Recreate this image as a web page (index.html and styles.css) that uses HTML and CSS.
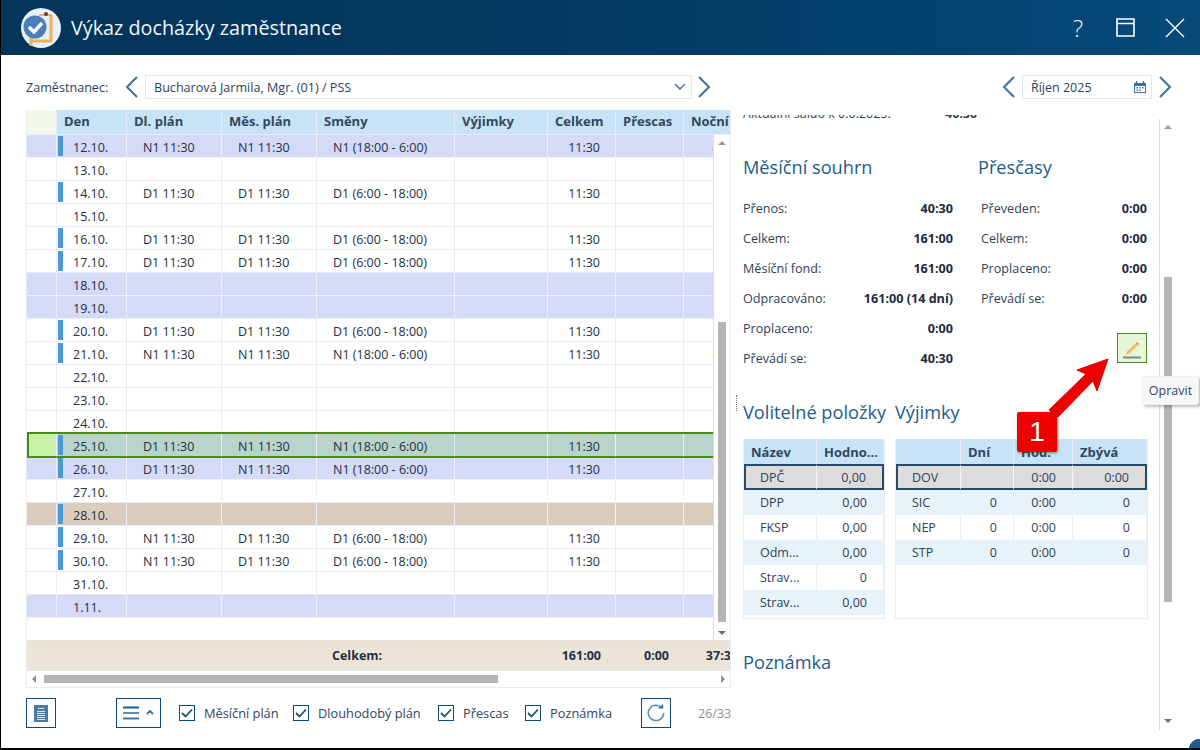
FILE: index.html
```html
<!DOCTYPE html>
<html lang="cs">
<head>
<meta charset="utf-8">
<title>Výkaz docházky zaměstnance</title>
<link rel="stylesheet" href="styles.css">
</head>
<body>
<div class="window">
  <header class="titlebar">
    <svg class="logo" width="42" height="42" viewBox="0 0 42 42">
      <circle cx="21" cy="21" r="20" fill="#e6f1f9"/>
      <path d="M11 39V30M11 34h20V8" fill="none" stroke="#f0b060" stroke-width="3"/>
      <path d="M19 7h13v2H19z" fill="#f0b060"/>
      <circle cx="26" cy="7" r="2" fill="#6a3a30"/>
      <circle cx="15" cy="20" r="11.500" fill="#4c7dbd"/>
      <path d="M9 20l5 5 8-9" fill="none" stroke="#fff" stroke-width="3.400"/>
    </svg>
    <h1 class="title">Výkaz docházky zaměstnance</h1>
    <span class="help">?</span>
    <svg class="winbtn" width="19" height="19" viewBox="0 0 19 19"><path d="M1 1h17v17H1zM1 5.500h17" fill="none" stroke="#fff" stroke-width="1.600"/></svg>
    <svg class="winbtn close" width="20" height="20" viewBox="0 0 20 20"><path d="M1 1l18 18M19 1L1 19" fill="none" stroke="#fff" stroke-width="1.400"/></svg>
  </header>

  <main class="content">
    <section class="left">
      <div class="filter">
        <span class="flabel">Zaměstnanec:</span>
        <svg class="chev" width="14" height="22" viewBox="0 0 14 22"><path d="M12 1L2 11l10 10" fill="none" stroke="#3f6f9f" stroke-width="2"/></svg>
        <div class="combo"><span>Bucharová Jarmila, Mgr. (01) / PSS</span>
          <svg width="12" height="8" viewBox="0 0 12 8"><path d="M1 1l5 5 5-5" fill="none" stroke="#3f6f9f" stroke-width="1.400"/></svg>
        </div>
        <svg class="chev" width="14" height="22" viewBox="0 0 14 22"><path d="M2 1l10 10L2 21" fill="none" stroke="#3f6f9f" stroke-width="2"/></svg>
      </div>

      <div class="grid">
        <div class="grid-body">
          <table class="days">
            <colgroup><col class="c0"><col class="c1"><col class="c2"><col class="c2"><col class="c3"><col class="c4"><col class="c5"><col class="c5"><col class="c6"></colgroup>
            <thead><tr><th class="corner"></th><th>Den</th><th>Dl. plán</th><th>Měs. plán</th><th>Směny</th><th>Výjimky</th><th>Celkem</th><th>Přescas</th><th>Noční</th></tr></thead>
            <tbody>
              <tr class="violet"><td></td><td class="day mark">12.10.</td><td>N1 11:30</td><td>N1 11:30</td><td>N1 (18:00 - 6:00)</td><td></td><td class="r">11:30</td><td></td><td class="night">8:00</td></tr>
              <tr><td></td><td class="day">13.10.</td><td></td><td></td><td></td><td></td><td></td><td></td><td></td></tr>
              <tr><td></td><td class="day mark">14.10.</td><td>D1 11:30</td><td>D1 11:30</td><td>D1 (6:00 - 18:00)</td><td></td><td class="r">11:30</td><td></td><td></td></tr>
              <tr><td></td><td class="day">15.10.</td><td></td><td></td><td></td><td></td><td></td><td></td><td></td></tr>
              <tr><td></td><td class="day mark">16.10.</td><td>D1 11:30</td><td>D1 11:30</td><td>D1 (6:00 - 18:00)</td><td></td><td class="r">11:30</td><td></td><td></td></tr>
              <tr><td></td><td class="day mark">17.10.</td><td>D1 11:30</td><td>D1 11:30</td><td>D1 (6:00 - 18:00)</td><td></td><td class="r">11:30</td><td></td><td></td></tr>
              <tr class="violet"><td></td><td class="day">18.10.</td><td></td><td></td><td></td><td></td><td></td><td></td><td></td></tr>
              <tr class="violet"><td></td><td class="day">19.10.</td><td></td><td></td><td></td><td></td><td></td><td></td><td></td></tr>
              <tr><td></td><td class="day mark">20.10.</td><td>D1 11:30</td><td>D1 11:30</td><td>D1 (6:00 - 18:00)</td><td></td><td class="r">11:30</td><td></td><td></td></tr>
              <tr><td></td><td class="day mark">21.10.</td><td>N1 11:30</td><td>N1 11:30</td><td>N1 (18:00 - 6:00)</td><td></td><td class="r">11:30</td><td></td><td class="night">8:00</td></tr>
              <tr><td></td><td class="day">22.10.</td><td></td><td></td><td></td><td></td><td></td><td></td><td></td></tr>
              <tr><td></td><td class="day">23.10.</td><td></td><td></td><td></td><td></td><td></td><td></td><td></td></tr>
              <tr><td></td><td class="day">24.10.</td><td></td><td></td><td></td><td></td><td></td><td></td><td></td></tr>
              <tr class="sel"><td></td><td class="day mark">25.10.</td><td>D1 11:30</td><td>N1 11:30</td><td>N1 (18:00 - 6:00)</td><td></td><td class="r">11:30</td><td></td><td class="night">8:00</td></tr>
              <tr class="violet"><td></td><td class="day mark">26.10.</td><td>D1 11:30</td><td>N1 11:30</td><td>N1 (18:00 - 6:00)</td><td></td><td class="r">11:30</td><td></td><td class="night">8:00</td></tr>
              <tr><td></td><td class="day">27.10.</td><td></td><td></td><td></td><td></td><td></td><td></td><td></td></tr>
              <tr class="tan"><td></td><td class="day mark">28.10.</td><td></td><td></td><td></td><td></td><td></td><td></td><td></td></tr>
              <tr><td></td><td class="day mark">29.10.</td><td>N1 11:30</td><td>D1 11:30</td><td>D1 (6:00 - 18:00)</td><td></td><td class="r">11:30</td><td></td><td></td></tr>
              <tr><td></td><td class="day mark">30.10.</td><td>N1 11:30</td><td>D1 11:30</td><td>D1 (6:00 - 18:00)</td><td></td><td class="r">11:30</td><td></td><td></td></tr>
              <tr><td></td><td class="day">31.10.</td><td></td><td></td><td></td><td></td><td></td><td></td><td></td></tr>
              <tr class="violet"><td></td><td class="day">1.11.</td><td></td><td></td><td></td><td></td><td></td><td></td><td></td></tr>
            </tbody>
          </table>
          <div class="vscroll">
            <span class="arrow up"></span>
            <span class="vthumb"></span>
            <span class="arrow down"></span>
          </div>
        </div>
        <table class="foot">
          <colgroup><col class="c0"><col class="c1"><col class="c2"><col class="c2"><col class="c3"><col class="c4"><col class="c5"><col class="c5"><col class="c6"></colgroup>
          <tr><td></td><td></td><td></td><td></td><td>Celkem:</td><td></td><td class="r">161:00</td><td class="r">0:00</td><td class="r wide">37:30</td></tr>
        </table>
        <div class="hscroll">
          <span class="arrow lft"></span>
          <span class="hthumb"></span>
          <span class="arrow rgt"></span>
        </div>
      </div>

      <div class="actions">
        <button class="btn doc" type="button" aria-label="Sestava">
          <svg width="14" height="17" viewBox="0 0 14 17"><path d="M0 0h14v17H0z" fill="#4a7ca5"/><path d="M4 3.500h6M3 6.500h8M3 8.500h8M3 10.500h8M3 12.500h8M3 14.500h8" stroke="#dbe8f1" stroke-width="1"/></svg>
        </button>
        <button class="btn menu" type="button" aria-label="Nabídka">
          <svg width="32" height="14" viewBox="0 0 32 14"><path d="M0 1.500h16" stroke="#1d5c8d" stroke-width="2"/><path d="M0 7h16" stroke="#5b8cb3" stroke-width="2"/><path d="M0 12.500h16" stroke="#3f76a3" stroke-width="2"/><path d="M24 8l3-3 3 3" fill="none" stroke="#35709f" stroke-width="1.800"/></svg>
        </button>
        <label class="check c-plan"><span class="box"><svg width="12" height="10" viewBox="0 0 12 10"><path d="M1 5l3.500 3.500L11 1.500" fill="none" stroke="#1d4f80" stroke-width="1.800"/></svg></span>Měsíční plán</label>
        <label class="check c-long"><span class="box"><svg width="12" height="10" viewBox="0 0 12 10"><path d="M1 5l3.500 3.500L11 1.500" fill="none" stroke="#1d4f80" stroke-width="1.800"/></svg></span>Dlouhodobý plán</label>
        <label class="check c-over"><span class="box"><svg width="12" height="10" viewBox="0 0 12 10"><path d="M1 5l3.500 3.500L11 1.500" fill="none" stroke="#1d4f80" stroke-width="1.800"/></svg></span>Přescas</label>
        <label class="check c-note"><span class="box"><svg width="12" height="10" viewBox="0 0 12 10"><path d="M1 5l3.500 3.500L11 1.500" fill="none" stroke="#1d4f80" stroke-width="1.800"/></svg></span>Poznámka</label>
        <button class="btn refresh" type="button" aria-label="Obnovit">
          <svg width="18" height="18" viewBox="0 0 18 18"><path d="M14.600 3.600A7.700 7.700 0 1 0 16.700 9" fill="none" stroke="#5b8cb3" stroke-width="1.500"/><path d="M10.800 4.600h5.400V0z" fill="#2f6a98"/></svg>
        </button>
        <span class="count">26/33</span>
      </div>
    </section>

    <section class="right">
      <div class="period">
        <svg class="chev" width="14" height="22" viewBox="0 0 14 22"><path d="M12 1L2 11l10 10" fill="none" stroke="#3f6f9f" stroke-width="2"/></svg>
        <div class="date"><span>Říjen 2025</span>
          <svg width="12" height="12" viewBox="0 0 12 12"><path d="M0 2h12v10H0z" fill="#3f6f9f"/><path d="M1 5h10v6H1z" fill="#fff"/><path d="M2.500 0v2M9.500 0v2" stroke="#3f6f9f" stroke-width="1.400"/><path d="M2.500 6h1.500v1.500H2.500zM5.250 6h1.500v1.500h-1.500zM8 6h1.500v1.500H8zM2.500 8.500h1.500V10H2.500zM5.250 8.500h1.500V10h-1.500z" fill="#3f6f9f"/></svg>
        </div>
        <svg class="chev" width="14" height="22" viewBox="0 0 14 22"><path d="M2 1l10 10L2 21" fill="none" stroke="#3f6f9f" stroke-width="2"/></svg>
      </div>

      <div class="panel">
        <div class="panel-inner">
          <div class="saldo"><span>Aktuální saldo k 0.0.2025:</span><b>40:30</b></div>

          <div class="summary">
            <div class="sum-left">
              <h2>Měsíční souhrn</h2>
              <div class="kv"><span>Přenos:</span><b>40:30</b></div>
              <div class="kv"><span>Celkem:</span><b>161:00</b></div>
              <div class="kv"><span>Měsíční fond:</span><b>161:00</b></div>
              <div class="kv"><span>Odpracováno:</span><b>161:00 (14 dní)</b></div>
              <div class="kv"><span>Proplaceno:</span><b>0:00</b></div>
              <div class="kv"><span>Převádí se:</span><b>40:30</b></div>
            </div>
            <div class="sum-right">
              <h2>Přesčasy</h2>
              <div class="kv ind"><span>Převeden:</span><b>0:00</b></div>
              <div class="kv ind"><span>Celkem:</span><b>0:00</b></div>
              <div class="kv ind"><span>Proplaceno:</span><b>0:00</b></div>
              <div class="kv ind"><span>Převádí se:</span><b>0:00</b></div>
              <button class="edit" type="button" aria-label="Opravit">
                <svg width="20" height="20" viewBox="0 0 20 20"><path d="M1 17.500h18" stroke="#85848c" stroke-width="2"/><path d="M4 14.500l1-3L14 3l2 2-8.500 8.500z" fill="#f0c060"/><path d="M14 3l1-1 2 2-1 1z" fill="#ef6a6a"/></svg>
              </button>
            </div>
          </div>

          <div class="lists">
            <div class="list-opt">
              <h2>Volitelné položky</h2>
              <div class="tbox">
                <table class="mini">
                  <colgroup><col class="m1"><col></colgroup>
                  <thead><tr><th>Název</th><th>Hodno...</th></tr></thead>
                  <tbody>
                    <tr class="cur"><td>DPČ</td><td class="r">0,00</td></tr>
                    <tr class="alt"><td>DPP</td><td class="r">0,00</td></tr>
                    <tr><td>FKSP</td><td class="r">0,00</td></tr>
                    <tr class="alt"><td>Odm...</td><td class="r">0,00</td></tr>
                    <tr><td>Strav...</td><td class="r">0</td></tr>
                    <tr class="alt"><td>Strav...</td><td class="r">0,00</td></tr>
                  </tbody>
                </table>
              </div>
            </div>
            <div class="list-exc">
              <h2>Výjimky</h2>
              <div class="tbox">
                <table class="mini">
                  <colgroup><col class="e1"><col class="e2"><col class="e3"><col></colgroup>
                  <thead><tr><th></th><th>Dní</th><th>Hod.</th><th>Zbývá</th></tr></thead>
                  <tbody>
                    <tr class="cur"><td>DOV</td><td class="r"></td><td class="r">0:00</td><td class="r">0:00</td></tr>
                    <tr class="alt"><td>SIC</td><td class="r">0</td><td class="r">0:00</td><td class="r">0</td></tr>
                    <tr><td>NEP</td><td class="r">0</td><td class="r">0:00</td><td class="r">0</td></tr>
                    <tr class="alt"><td>STP</td><td class="r">0</td><td class="r">0:00</td><td class="r">0</td></tr>
                  </tbody>
                </table>
              </div>
            </div>
          </div>

          <h2 class="note">Poznámka</h2>
        </div>
        <div class="pscroll">
          <span class="arrow up"></span>
          <span class="pthumb"></span>
          <span class="arrow down"></span>
        </div>
      </div>
    </section>
  </main>

  <svg class="callout-arrow" width="70" height="70" viewBox="0 0 70 70"><path d="M68 1L57 33 53 23 18 59 9 52 46 16 37 12z" fill="#f00000" stroke="#d80000" stroke-width="1"/></svg>
  <div class="callout-badge">1</div>
  <div class="tooltip">Opravit</div>
  <span class="splitter"></span>
  <span class="grip"></span>
</div>
</body>
</html>
```
FILE: styles.css
```css
* { box-sizing: border-box; }
html, body { margin: 0; padding: 0; }
body { width: 1200px; height: 750px; overflow: hidden; background: #fff; font-family: "Open Sans", "Noto Sans", sans-serif; font-size: 13px; color: #2e3f57; }
.window { position: relative; width: 1200px; height: 750px; display: flex; flex-direction: column; border-left: 1px solid #000; border-bottom: 2px solid #000; overflow: hidden; }

.titlebar { flex: none; height: 55px; margin-left: -1px; display: flex; align-items: center; padding: 0 15px 0 20px; background: linear-gradient(90deg, #03345a 0%, #03385f 40%, #054a7a 100%); color: #fff; }
.logo { flex: none; margin-right: 9px; }
.title { flex: 1; margin: 0; font-size: 19.8px; font-weight: 400; color: #f2f6fa; }
.help { font-size: 24px; margin-right: 33px; font-weight: 300; color: #f2f6fa; }
.winbtn { flex: none; margin-right: 30px; }
.winbtn.close { margin-right: 0; }

.content { flex: 1; min-height: 0; display: flex; padding: 20px 0 0 25px; }
.left { flex: none; width: 706px; display: flex; flex-direction: column; }
.right { flex: 1; min-width: 0; padding-left: 3px; display: flex; flex-direction: column; }

.filter { flex: none; height: 24px; display: flex; align-items: center; }
.flabel { width: 99px; font-size: 12.6px; }
.chev { flex: none; }
.combo { width: 547px; height: 24px; margin: 0 5px 0 6px; display: flex; align-items: center; justify-content: space-between; padding: 0 5px 0 8px; border: 1px solid #e2e8f3; font-size: 12.6px; }

.grid { flex: none; width: 705px; height: 578px; margin-top: 11px; display: flex; flex-direction: column; border: 1px solid #e8eaf5; border-top: 0; overflow: hidden; }
.grid-body { position: relative; flex: 1; min-height: 0; overflow: hidden; }
.days, .foot { table-layout: fixed; width: 727px; border-collapse: separate; border-spacing: 0; }
.c0 { width: 30px; } .c1 { width: 70px; } .c2 { width: 95px; } .c3 { width: 138px; } .c4 { width: 93px; } .c5 { width: 68px; } .c6 { width: 70px; }
.days th { height: 25px; padding: 0 0 2px 7px; text-align: left; font-size: 13px; font-weight: 700; color: #33475f; background: #c6e4f6; border-right: 1px solid #e8ecf8; border-bottom: 1px solid #e8ecf8; white-space: nowrap; overflow: hidden; }
.days th.corner { background: #f0f9ea; }
.days td { height: 23px; padding: 3px 0 0 16px; font-size: 12.5px; line-height: 19px; color: #23303f; border-right: 1px solid #e9ecf8; border-bottom: 1px solid #e9ecf8; white-space: nowrap; overflow: hidden; position: relative; }
.days td.r, .foot td.r { padding-left: 0; padding-right: 15px; text-align: right; }
.days td.night { padding-left: 0; padding-right: 16px; text-align: right; color: #d9822b; }
.foot td.r.wide { padding-right: 16px; }
.violet td { background: #d5daf9; border-color: #eef0fb; }
.tan td { background: #dacdbe; border-color: #eef0fb; }
.mark::before { content: ""; position: absolute; left: 1px; top: 1px; bottom: 1px; width: 5px; background: #4a9ad8; }
.sel td { background: #b9d4cc; border-bottom-color: #458a12; box-shadow: 0 -2px 0 #458a12, 0 1px 0 #458a12; z-index: 1; overflow: visible; }
.sel td:first-child { background: #c8f0a8; border-left: 2px solid #458a12; }

.vscroll { position: absolute; z-index: 2; right: 0; top: 25px; bottom: 0; width: 17px; background: #fff; border-left: 1px solid #dcdce4; }
.vthumb { position: absolute; left: 4px; top: 187px; width: 8px; height: 300px; background: #b5b5b5; }
.arrow { position: absolute; width: 0; height: 0; border: 4px solid transparent; }
.arrow.up { top: 6px; left: 4px; border-bottom-color: #9a9a9a; border-top-width: 0; }
.arrow.down { bottom: 5px; left: 4px; border-top-color: #6f6f6f; border-bottom-width: 0; }

.foot { height: 31px; flex: none; background: #ece4d6; border-top: 1px solid #e4e2e0; border-bottom: 1px solid #e4e4ee; }
.foot td { padding: 0 0 0 15px; font-size: 12.5px; font-weight: 700; color: #1f2f48; white-space: nowrap; overflow: hidden; }
.hscroll { position: relative; flex: none; height: 16px; background: #fff; }
.hthumb { position: absolute; left: 17px; top: 4px; width: 454px; height: 8px; background: #b5b5b5; }
.arrow.lft { left: 5px; top: 4px; border-right-color: #8d8d8d; border-left-width: 0; }
.arrow.rgt { right: 5px; top: 4px; border-left-color: #8d8d8d; border-right-width: 0; }

.actions { flex: none; margin-top: 10px; height: 30px; display: flex; align-items: center; }
.btn { flex: none; height: 30px; padding: 0; background: #fff; border: 1px solid #0b4a7c; display: flex; align-items: center; justify-content: center; }
.doc { width: 30px; }
.menu { width: 45px; margin-left: 60px; }
.refresh { width: 30px; }
.check { flex: none; display: flex; align-items: center; font-size: 12.8px; color: #33445c; }
.c-plan { margin-left: 18px; width: 114px; }
.c-long { width: 145px; }
.c-over { width: 87px; }
.c-note { width: 116px; }
.box { width: 16px; height: 16px; margin-right: 9px; border: 1px solid #0b4a7c; display: flex; align-items: center; justify-content: center; }
.count { margin-left: 27px; font-size: 12.5px; color: #8a8f96; }

.period { flex: none; height: 24px; display: flex; align-items: center; justify-content: flex-end; padding-right: 28px; }
.date { width: 130px; height: 24px; margin: 0 6px 0 6px; display: flex; align-items: center; justify-content: space-between; padding: 0 5px 0 8px; border: 1px solid #e2e8f3; font-size: 12.5px; }

.panel { position: relative; flex: 1; min-height: 0; margin-top: 16px; overflow: hidden; }
.panel-inner { width: 424px; height: 100%; padding-left: 8px; overflow: hidden; }
.saldo { height: 18px; margin-top: -10px; line-height: 18px; display: flex; font-size: 12.5px; }
.saldo span { width: 202px; }
.saldo b { font-weight: 700; }
h2 { margin: 0; height: 26px; line-height: 26px; font-size: 18.2px; font-weight: 400; color: #1d5c8d; white-space: nowrap; }
.summary { display: flex; gap: 25px; margin-top: 31px; }
.sum-left { width: 210px; }
.sum-right { width: 169px; }
.sum-left h2, .sum-right h2 { margin-bottom: 13px; }
.kv { height: 30px; display: flex; align-items: center; justify-content: space-between; font-size: 12.6px; }
.kv b { color: #1c2a3f; font-weight: 700; }
.ind { padding-left: 3px; }
.edit { display: block; width: 30px; height: 30px; margin: 20px 0 0 auto; padding: 0; background: #e4f7d8; border: 1px solid #4a8a20; }
.edit svg { display: block; margin: 3px auto 0; }

.lists { display: flex; gap: 10px; margin-top: 26px; }
.list-opt { width: 142px; }
.list-exc { width: 253px; }
.lists h2 { margin-bottom: 14px; }
.tbox { height: 180px; border: 1px solid #e9ebf4; border-top: 0; }
.mini { table-layout: fixed; width: 100%; border-collapse: separate; border-spacing: 0; }
.m1 { width: 73px; } .e1 { width: 65px; } .e2 { width: 53px; } .e3 { width: 59px; }
.mini th { height: 25px; padding: 0 0 0 7px; text-align: left; font-size: 13px; font-weight: 700; color: #33475f; background: #c6e4f6; border-right: 1px solid #e8ecf8; white-space: nowrap; overflow: hidden; }
.mini td { height: 25px; padding: 0 0 0 16px; font-size: 12.5px; color: #2e3f57; border-right: 1px solid #ecf0f8; }
.mini td.r { padding: 0 16px 0 0; text-align: right; }
.mini .alt td { background: #e6f3fb; }
.mini .cur td { height: 26px; background: #dcdcdc; border-top: 2px solid #264a6a; border-bottom: 2px solid #264a6a; border-right: 1px solid #f4f4f8; }
.mini .cur td:first-child { border-left: 2px solid #264a6a; padding-left: 14px; }
.mini .cur td:last-child { border-right: 2px solid #264a6a; }
.note { margin-top: 30px; }

.pscroll { position: absolute; left: 424px; top: 4px; bottom: 18px; width: 17px; border-left: 1px solid #dcdce2; }
.pthumb { position: absolute; left: 4px; top: 158px; width: 8px; height: 325px; background: #b5b5b5; }
.pscroll .arrow.up { top: 6px; }
.pscroll .arrow.down { bottom: 7px; }

.callout-arrow { position: absolute; left: 1039px; top: 358px; }
.callout-badge { position: absolute; left: 1016px; top: 412px; width: 40px; height: 40px; background: #ee0000; border-radius: 2px; box-shadow: 1px 1px 3px rgba(80,0,0,.5); color: #fff; font-family: "Liberation Sans", Arial, sans-serif; font-size: 28px; line-height: 40px; text-align: center; }
.tooltip { position: absolute; left: 1141px; top: 376px; width: 57px; height: 29px; background: #f8f8f8; border: 1px solid #eee; border-radius: 3px; box-shadow: 2px 2px 3px rgba(0,0,0,.25); font-size: 12.5px; line-height: 27px; text-align: center; color: #33445c; }
.splitter { position: absolute; left: 735px; top: 395px; height: 16px; border-left: 1px dotted #777; }
.grip { position: absolute; right: 0; bottom: -2px; width: 11px; height: 11px; background: radial-gradient(circle at 100% 100%, #1d5c8d 0 70%, transparent 75%); }
```
